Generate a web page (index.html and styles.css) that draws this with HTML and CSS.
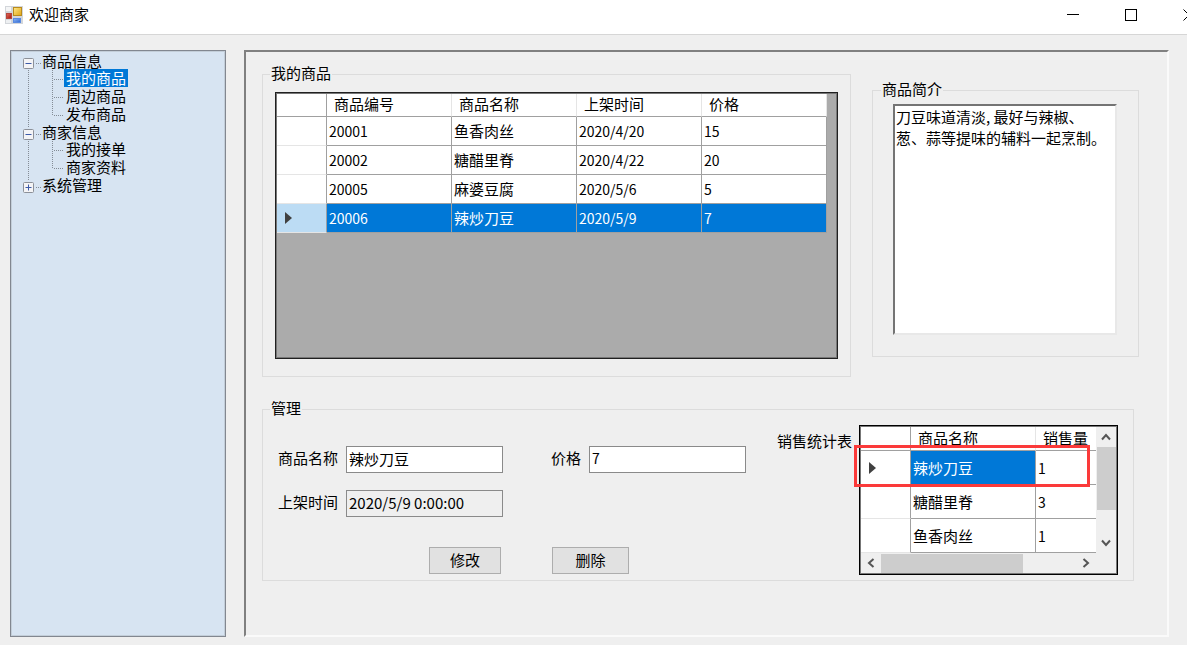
FILE: index.html
```html
<!DOCTYPE html>
<html lang="zh-CN">
<head>
<meta charset="utf-8">
<title>欢迎商家</title>
<link rel="stylesheet" href="styles.css">
</head>
<body>
<div class="window">
  <header class="titlebar">
    <svg class="app-icon" width="18" height="18" viewBox="0 0 18 18">
      <rect x="0" y="0" width="18" height="18" fill="#d3d6da"/>
      <rect x="1" y="1" width="5" height="4" fill="#f4f5f6"/>
      <rect x="1" y="14" width="5" height="3" fill="#eef0f2"/>
      <defs>
        <linearGradient id="gold" x1="0" y1="0" x2="1" y2="1"><stop offset="0" stop-color="#ffe88a"/><stop offset="1" stop-color="#e0a512"/></linearGradient>
        <linearGradient id="red" x1="0" y1="0" x2="1" y2="1"><stop offset="0" stop-color="#e06a5c"/><stop offset="1" stop-color="#a8140c"/></linearGradient>
        <linearGradient id="blue" x1="0" y1="0" x2="1" y2="1"><stop offset="0" stop-color="#8db8f5"/><stop offset="1" stop-color="#2f66d0"/></linearGradient>
      </defs>
      <rect x="8.500" y="1.500" width="8" height="8" fill="url(#gold)" stroke="#b98a1c"/>
      <rect x="1.500" y="7.500" width="5" height="5" fill="url(#red)" stroke="#b5453c"/>
      <rect x="8.500" y="12.500" width="7" height="4" fill="url(#blue)" stroke="#5a8ae0"/>
    </svg>
    <h1 class="title">欢迎商家</h1>
    <div class="window-buttons">
      <button type="button" aria-label="最小化"><svg width="12" height="12"><path d="M0 5.500H12" stroke="#000"/></svg></button>
      <button type="button" aria-label="最大化"><svg width="12" height="12"><rect x=".5" y=".5" width="11" height="11" fill="none" stroke="#000"/></svg></button>
      <button type="button" aria-label="关闭"><svg width="12" height="12"><path d="M.5.5l11 11M11.500.5l-11 11" stroke="#000"/></svg></button>
    </div>
  </header>

  <div class="workspace">
    <nav class="tree" aria-label="导航">
      <ul>
        <li>
          <div class="node parent"><button type="button" class="toggle" aria-label="折叠"><svg width="28" height="17"><path class="dots" d="M22 11.500H27"/><rect class="box" x="9.500" y="6.500" width="10" height="10" rx="1"/><path class="sign" d="M11.500 11.500H17.500"/></svg></button><a href="#">商品信息</a></div>
          <ul>
            <li class="node"><svg width="50" height="18"><path class="dots" d="M14.500 1V18M38.500 1V18M40 10.500H50"/></svg><a href="#" class="selected">我的商品</a></li>
            <li class="node"><svg width="50" height="18"><path class="dots" d="M14.500 1V18M38.500 1V18M40 10.500H50"/></svg><a href="#">周边商品</a></li>
            <li class="node"><svg width="50" height="18"><path class="dots" d="M14.500 1V18M38.500 1V11M40 10.500H50"/></svg><a href="#">发布商品</a></li>
          </ul>
        </li>
        <li>
          <div class="node parent"><button type="button" class="toggle" aria-label="折叠"><svg width="28" height="17"><path class="dots" d="M14.500 1V5M22 11.500H27"/><rect class="box" x="9.500" y="6.500" width="10" height="10" rx="1"/><path class="sign" d="M11.500 11.500H17.500"/></svg></button><a href="#">商家信息</a></div>
          <ul>
            <li class="node"><svg width="50" height="18"><path class="dots" d="M14.500 1V18M38.500 1V18M40 10.500H50"/></svg><a href="#">我的接单</a></li>
            <li class="node"><svg width="50" height="18"><path class="dots" d="M14.500 1V18M38.500 1V11M40 10.500H50"/></svg><a href="#">商家资料</a></li>
          </ul>
        </li>
        <li>
          <div class="node parent"><button type="button" class="toggle" aria-label="展开"><svg width="28" height="17"><path class="dots" d="M14.500 1V5M22 11.500H27"/><rect class="box" x="9.500" y="6.500" width="10" height="10" rx="1"/><path class="sign" d="M11.500 11.500H17.500M14.500 8.500V14.500"/></svg></button><a href="#">系统管理</a></div>
        </li>
      </ul>
    </nav>

    <main class="panel">
      <div class="top-row">
        <fieldset class="group goods">
          <legend>我的商品</legend>
          <div class="grid-view">
            <table class="data goods-table">
              <thead>
                <tr><td class="row-head"></td><th>商品编号</th><th>商品名称</th><th>上架时间</th><th>价格</th></tr>
              </thead>
              <tbody>
                <tr><td class="row-head"></td><td class="num">20001</td><td>鱼香肉丝</td><td class="num">2020/4/20</td><td class="num">15</td></tr>
                <tr><td class="row-head"></td><td class="num">20002</td><td>糖醋里脊</td><td class="num">2020/4/22</td><td class="num">20</td></tr>
                <tr><td class="row-head"></td><td class="num">20005</td><td>麻婆豆腐</td><td class="num">2020/5/6</td><td class="num">5</td></tr>
                <tr class="current"><td class="row-head"><svg width="7" height="12"><path d="M0 0L7 6L0 12Z" fill="#404040"/></svg></td><td class="num">20006</td><td>辣炒刀豆</td><td class="num">2020/5/9</td><td class="num">7</td></tr>
              </tbody>
            </table>
          </div>
        </fieldset>

        <fieldset class="group intro">
          <legend><label for="intro">商品简介</label></legend>
          <textarea id="intro" spellcheck="false">刀豆味道清淡, 最好与辣椒、
葱、蒜等提味的辅料一起烹制。</textarea>
        </fieldset>
      </div>

      <fieldset class="group manage">
        <legend>管理</legend>
        <div class="manage-row">
          <form class="editor">
            <div class="fields">
              <label for="name">商品名称</label>
              <input id="name" type="text" value="辣炒刀豆">
              <label class="second" for="price">价格</label>
              <input id="price" class="num" type="text" value="7">
              <label for="time">上架时间</label>
              <input id="time" type="text" value="2020/5/9 0:00:00" readonly>
            </div>
            <div class="actions">
              <button type="button" class="edit">修改</button>
              <button type="button" class="delete">删除</button>
            </div>
          </form>
          <div class="stats">
            <span class="stats-label" id="stats-label">销售统计表</span>
            <div class="stats-view">
              <div class="stats-body">
                <table class="data stats-table" aria-labelledby="stats-label">
                  <thead>
                    <tr><td class="row-head"></td><th>商品名称</th><th>销售量</th></tr>
                  </thead>
                  <tbody>
                    <tr><td class="row-head"><svg width="7" height="12"><path d="M0 0L7 6L0 12Z" fill="#404040"/></svg></td><td class="picked">辣炒刀豆</td><td class="num">1</td></tr>
                    <tr><td class="row-head"></td><td>糖醋里脊</td><td class="num">3</td></tr>
                    <tr><td class="row-head"></td><td>鱼香肉丝</td><td class="num">1</td></tr>
                  </tbody>
                </table>
              </div>
              <div class="vscroll">
                <button type="button" aria-label="向上"><svg width="10" height="8"><path d="M1 6.500L5 2L9 6.500"/></svg></button>
                <div class="thumb"></div>
                <button type="button" aria-label="向下"><svg width="10" height="8"><path d="M1 1.500L5 6L9 1.500"/></svg></button>
              </div>
              <div class="hscroll">
                <button type="button" aria-label="向左"><svg width="8" height="10"><path d="M6.500 1L2 5L6.500 9"/></svg></button>
                <div class="thumb"></div>
                <button type="button" aria-label="向右"><svg width="8" height="10"><path d="M1.500 1L6 5L1.500 9"/></svg></button>
              </div>
              <div class="highlight"></div>
            </div>
          </div>
        </div>
      </fieldset>
    </main>
  </div>
</div>
</body>
</html>
```

FILE: styles.css
```css
* {
  box-sizing: border-box;
}

body {
  margin: 0;
  overflow: hidden;
  background: #efefef;
  color: #000;
  font: 15px/20px "Noto Sans CJK SC", sans-serif;
}

button,
input,
textarea {
  font: inherit;
  color: inherit;
  margin: 0;
  border-radius: 0;
}

svg {
  display: block;
  flex: none;
}

a {
  color: inherit;
  text-decoration: none;
}

.window {
  display: flex;
  flex-direction: column;
  min-height: 100vh;
}

/* Title bar */
.titlebar {
  display: flex;
  align-items: center;
  height: 35px;
  padding: 0 0 5px 5px;
  background: #fff;
  border-bottom: 1px solid #d6d6d6;
  overflow: hidden;
}

.title {
  margin: 0 auto 0 6px;
  padding-bottom: 2px;
  font-size: 15px;
  font-weight: 400;
}

.window-buttons {
  display: flex;
  margin-right: -31px;
}

.window-buttons button {
  display: flex;
  align-items: center;
  justify-content: center;
  width: 58px;
  height: 29px;
  padding: 0;
  border: 0;
  background: none;
}

.workspace {
  flex: 1;
  display: flex;
  gap: 18px;
  padding: 15px 18px 8px 10px;
}

/* Navigation tree */
.tree {
  flex: none;
  width: 216px;
  padding: 1px 0 0 3px;
  background: #d7e4f2;
  border: 1px solid #828790;
  box-shadow: inset 0 0 0 1px #c3ced9;
}

.tree ul {
  margin: 0;
  padding: 0;
  list-style: none;
}

.node {
  display: flex;
  line-height: 18px;
}

.node.parent {
  line-height: 17px;
}

.node .selected {
  background: #0078d7;
  color: #fff;
}

.node a {
  padding: 0 2px;
}

.node.parent a {
  padding: 0;
}

.toggle {
  padding: 0;
  border: 0;
  background: none;
}

.dots {
  fill: none;
  stroke: #848c96;
  stroke-dasharray: 1 1;
}

.box {
  fill: #f4f4f6;
  stroke: #8c9098;
}

.sign {
  stroke: #3c5aa8;
}

/* Main panel */
.panel {
  flex: 1;
  min-width: 0;
  padding: 11px 28px 0 16px;
  border: 2px solid;
  border-color: #808080 #fafafa #fafafa #808080;
}

.top-row {
  display: flex;
  align-items: flex-start;
  gap: 21px;
}

.group {
  min-width: 0;
  margin: 0;
  border: 1px solid #dcdcdc;
}

.group legend {
  padding: 0 1px 2px;
}

.goods {
  flex: 1;
  padding: 7px 12px 17px;
}

.goods legend {
  margin-left: -5px;
}

.grid-view {
  height: 267px;
  background: #ababab;
  border: 1px solid #202020;
  box-shadow: inset 0 0 0 1px #777;
  padding: 1px;
}

.data {
  table-layout: fixed;
  border-spacing: 0;
  background: #fff;
}

.data th,
.data td {
  width: 125px;
  padding: 0 0 0 2px;
  text-align: left;
  font-weight: 400;
  white-space: nowrap;
  border: 0 solid #a0a0a0;
  border-width: 0 1px 1px 0;
}

.data th {
  padding: 0 0 2px 7px;
  border-right-color: #e5e5e5;
}

.data .row-head {
  width: 50px;
  padding-left: 8px;
  border-bottom-color: #e5e5e5;
}

.data thead .row-head {
  border-bottom-color: #a0a0a0;
}

.data .num,
input.num {
  font-size: 14px;
}

.goods-table {
  width: 550px;
}

.goods-table tr {
  height: 29px;
}

.goods-table thead tr {
  height: 23px;
}

.current td {
  background: #0078d7;
  color: #fff;
}

.current .row-head {
  background: #bcdcf4;
}

.intro {
  width: 267px;
  margin-top: 16px;
  padding: 3px 21px 21px 20px;
}

.intro legend {
  margin-left: -12px;
}

.intro textarea {
  display: block;
  width: 100%;
  height: 231px;
  padding: 0 0 0 1px;
  line-height: 21px;
  background: #fff;
  border: 2px solid;
  border-color: #747474 #e8e8e8 #e8e8e8 #747474;
  outline: 0;
  resize: none;
  overflow: hidden;
}

/* Product editor and sales statistics */
.manage {
  margin: 21px 5px 0 0;
  padding: 5px 15px 5px;
}

.manage legend {
  margin-left: -8px;
}

.manage-row {
  display: flex;
  justify-content: space-between;
}

.editor {
  padding-top: 21px;
}

.fields {
  display: grid;
  grid-template-columns: 60px 157px 70px 157px;
  column-gap: 8px;
  row-gap: 17px;
  align-items: center;
}

.fields label {
  padding-bottom: 3px;
}

.fields .second {
  justify-self: end;
}

.fields input {
  width: 100%;
  height: 27px;
  padding: 0 2px 3px;
  background: #fff;
  border: 1px solid #8a8a8a;
  outline: 0;
}

.fields input:read-only {
  background: #efefef;
}

.actions {
  display: flex;
  gap: 51px;
  padding: 30px 0 0 151px;
}

.actions button {
  height: 27px;
  padding: 0 0 2px;
  background: #e1e1e1;
  border: 1px solid #adadad;
}

.edit {
  width: 72px;
}

.delete {
  width: 77px;
}

.stats {
  display: flex;
  gap: 7px;
}

.stats-label {
  padding-top: 6px;
}

.stats-view {
  position: relative;
  display: grid;
  grid-template-columns: 235px 20px;
  grid-template-rows: 126px 20px;
  padding: 1px;
  border: 1px solid #000;
  box-shadow: inset 0 0 0 1px #777;
}

.stats-body {
  overflow: hidden;
}

.stats-table {
  width: 300px;
}

.stats-table tr {
  height: 34px;
}

.stats-table thead tr {
  height: 24px;
}

.stats-table .picked {
  background: #0078d7;
  color: #fff;
}

.vscroll,
.hscroll {
  display: flex;
  align-items: center;
}

.vscroll {
  flex-direction: column;
}

.hscroll button,
.vscroll button {
  display: flex;
  align-items: center;
  justify-content: center;
  width: 20px;
  height: 20px;
  padding: 0;
  border: 0;
  background: none;
}

.hscroll path,
.vscroll path {
  fill: none;
  stroke: #555;
  stroke-width: 2;
}

.thumb {
  background: #cdcdcd;
}

.vscroll .thumb {
  width: 19px;
  height: 63px;
  margin-bottom: auto;
}

.hscroll .thumb {
  width: 142px;
  height: 19px;
  margin-right: auto;
}

.highlight {
  position: absolute;
  top: 19px;
  left: -6px;
  width: 236px;
  height: 42px;
  border: 3px solid #fb3a3a;
}
```
